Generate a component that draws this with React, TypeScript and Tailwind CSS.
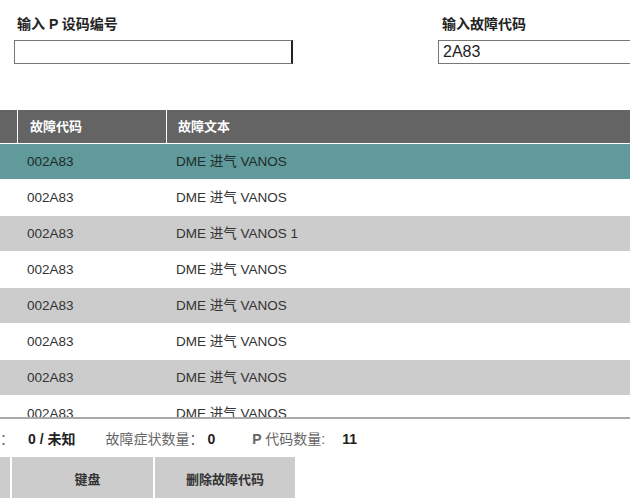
import React from "react";

const rows = [
  { code: "002A83", text: "DME 进气 VANOS" },
  { code: "002A83", text: "DME 进气 VANOS" },
  { code: "002A83", text: "DME 进气 VANOS 1" },
  { code: "002A83", text: "DME 进气 VANOS" },
  { code: "002A83", text: "DME 进气 VANOS" },
  { code: "002A83", text: "DME 进气 VANOS" },
  { code: "002A83", text: "DME 进气 VANOS" },
  { code: "002A83", text: "DME 进气 VANOS" },
];

export default function App() {
  return (
    <div className="w-[630px] h-[498px] overflow-hidden bg-white font-[family-name:Liberation_Sans,Noto_Sans_CJK_SC,sans-serif] text-[#333]">
      {/* top inputs */}
      <div className="h-[110px] flex pl-[14px] pt-[16px]">
        <div className="w-[279px] shrink-0 flex flex-col">
          <div className="pl-[3px] h-[16px] leading-[16px] text-[14px] font-bold text-[#222]">输入 P 设码编号</div>
          <div className="mt-[8px] h-[24px] border border-[#777] border-r-[#222] border-r-2 bg-white"></div>
        </div>
        <div className="ml-[145px] w-[279px] shrink-0 flex flex-col">
          <div className="pl-[4px] h-[16px] leading-[16px] text-[14px] font-bold text-[#222]">输入故障代码</div>
          <div className="mt-[8px] h-[24px] border border-[#777] bg-white flex items-center pl-[4px] text-[16px] text-[#222]">2A83</div>
        </div>
      </div>

      {/* table */}
      <div className="h-[309px] overflow-hidden border-b-2 border-[#aaa]">
        <div className="flex h-[33px] bg-[#646464] text-white text-[13px] font-bold">
          <div className="w-[17px] shrink-0"></div>
          <div className="w-[149px] shrink-0 border-l-[1.5px] border-white flex items-center pl-[12px]">故障代码</div>
          <div className="flex-1 border-l-[1.5px] border-white flex items-center pl-[11px]">故障文本</div>
        </div>
        {rows.map((r, i) => (
          <div
            key={i}
            className={
              "flex h-[36px] border-t-[1.5px] border-white text-[13.5px] items-center pt-[2px] " +
              (i === 0 ? "bg-[#609a9a] text-[#1f2a2a]" : i % 2 === 0 ? "bg-[#cccccc]" : "bg-white")
            }
          >
            <div className="w-[17px] shrink-0"></div>
            <div className="w-[149px] shrink-0 pl-[10px]">{r.code}</div>
            <div className="flex-1 pl-[10px]">{r.text}</div>
          </div>
        ))}
      </div>

      {/* status */}
      <div className="h-[38px] flex items-center text-[14px] whitespace-nowrap pt-[3px]">
        <span className="text-[#666] w-[14px]">：</span>
        <span className="ml-[14px] font-bold text-[#222]">0 / 未知</span>
        <span className="ml-[30px] text-[#666]">故障症状数量：</span>
        <span className="ml-[4px] font-bold text-[#222]">0</span>
        <span className="ml-[37px] text-[#666] font-bold">P <span className="font-normal">代码数量:</span></span>
        <span className="ml-[17px] font-bold text-[#222]">11</span>
      </div>

      {/* buttons */}
      <div className="flex h-[46px] gap-[2px] text-[13px] font-bold text-[#333]">
        <div className="w-[10px] bg-[#cccccc]"></div>
        <div className="w-[141px] bg-[#cccccc] flex items-center justify-center pl-[10px]">键盘</div>
        <div className="w-[140px] bg-[#cccccc] flex items-center justify-center">删除故障代码</div>
      </div>
    </div>
  );
}
